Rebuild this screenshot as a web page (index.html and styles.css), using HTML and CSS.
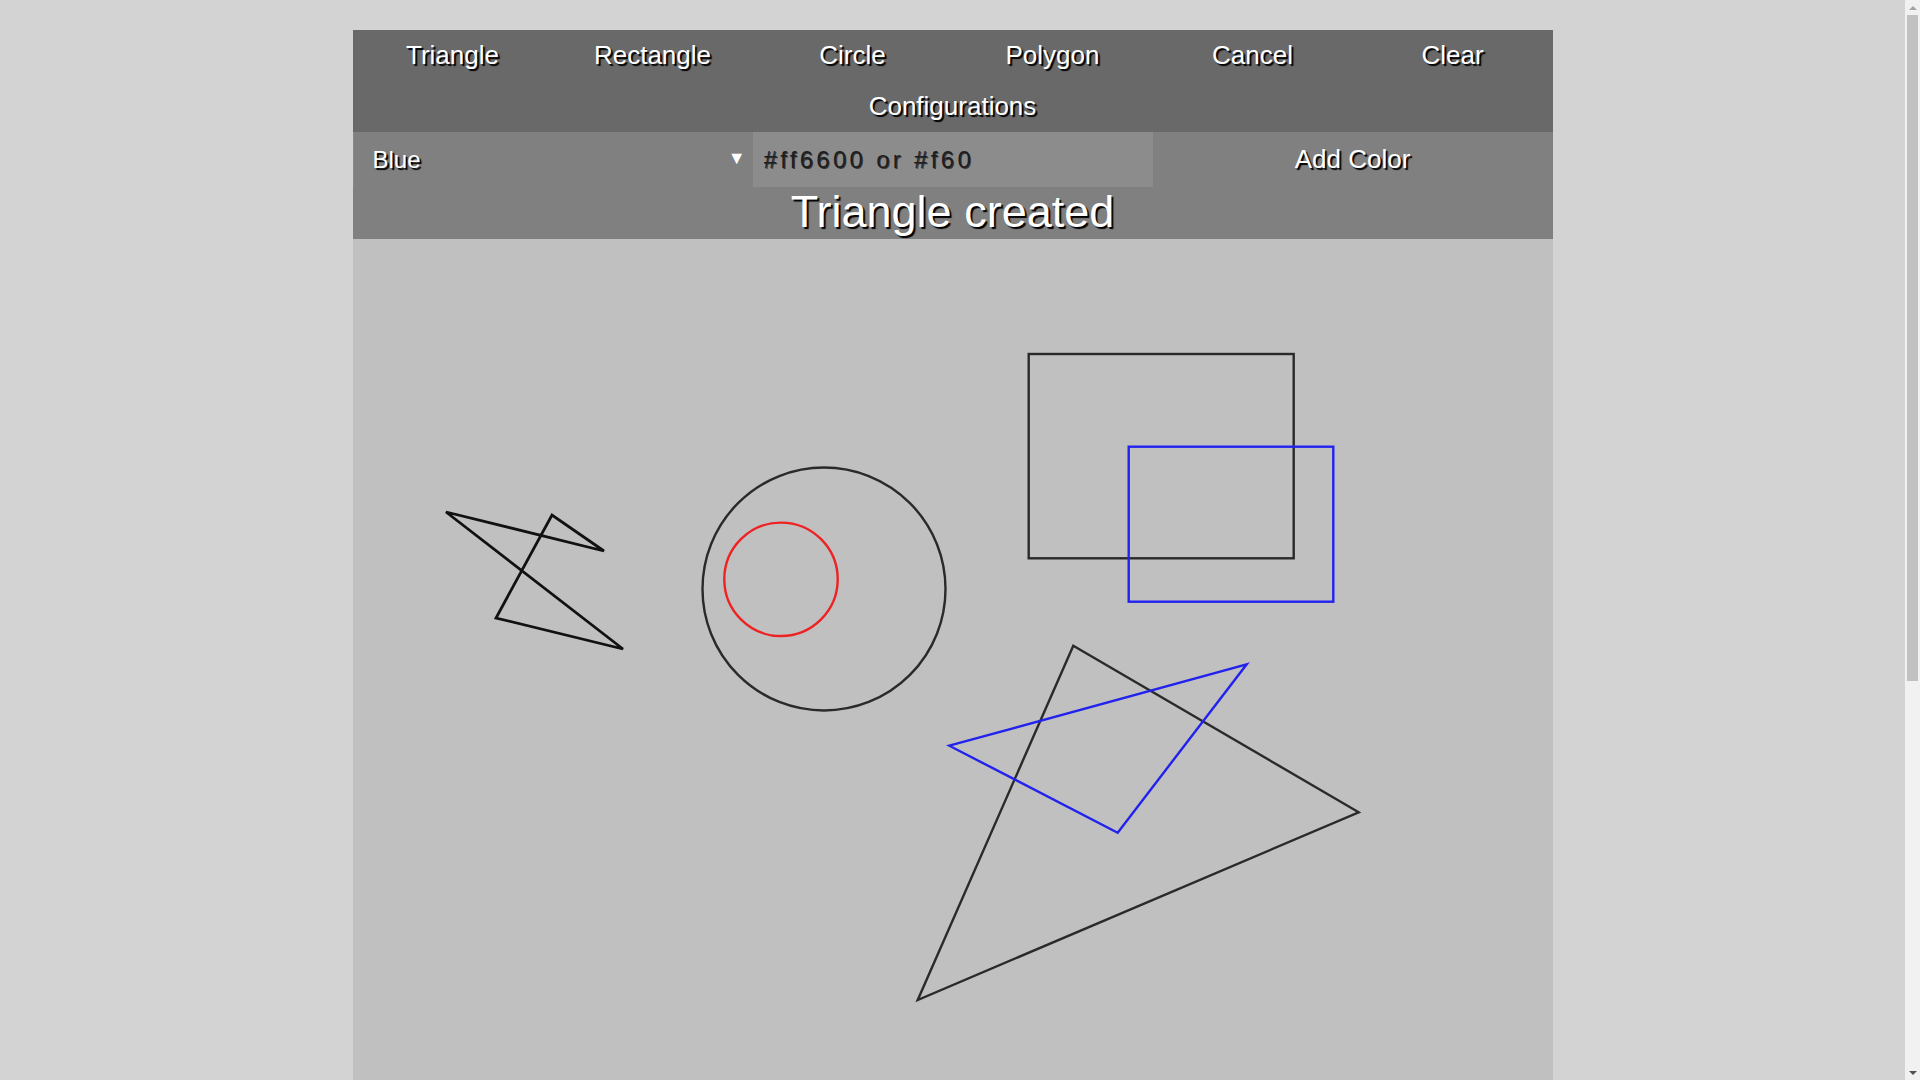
FILE: index.html
```html
<!DOCTYPE html>
<html lang="en">
<head>
<meta charset="utf-8">
<title>Shapes</title>
<link rel="stylesheet" href="styles.css">
</head>
<body>
<div class="app">
  <ul class="menu">
    <li class="menu-item">Triangle</li>
    <li class="menu-item">Rectangle</li>
    <li class="menu-item">Circle</li>
    <li class="menu-item">Polygon</li>
    <li class="menu-item">Cancel</li>
    <li class="menu-item">Clear</li>
    <li class="menu-item">Configurations</li>
  </ul>
  <div class="toolbar">
    <div class="controls">
      <div class="select-wrap">
        <select class="color-select">
          <option>Blue</option>
          <option>Red</option>
          <option>Black</option>
        </select>
        <span class="select-arrow">▼</span>
      </div>
      <input class="color-input" type="text" placeholder="#ff6600 or #f60">
      <button class="add-btn">Add Color</button>
    </div>
    <div class="message">Triangle created</div>
  </div>
  <div class="canvas">
    <svg class="drawing" width="1200" height="1460" viewBox="0 0 1200 1460">
      <polygon class="shape dark" points="93,273 251,312 199,276 143,379 270,410"/>
      <circle class="shape gray" cx="471" cy="350" r="121.5"/>
      <circle class="shape red" cx="428" cy="340.3" r="56.7"/>
      <rect class="shape gray" x="675.7" y="115" width="265" height="204.3"/>
      <rect class="shape blue" x="775.7" y="207.7" width="204.6" height="155"/>
      <polygon class="shape gray" points="720.3,406.7 1005.7,573.3 564.7,761"/>
      <polygon class="shape blue" points="596.3,506.7 893.7,425.3 764.7,593.7"/>
    </svg>
  </div>
</div>
<div class="scrollbar" aria-hidden="true">
  <div class="scroll-btn"><span class="arrow-up"></span></div>
  <div class="scroll-track"><div class="scroll-thumb"></div></div>
  <div class="scroll-btn"><span class="arrow-down"></span></div>
</div>
</body>
</html>
```

FILE: styles.css
```css
html {
  scrollbar-width: none;
}

html, body {
  margin: 0;
  padding: 0;
}

body {
  background: #d3d3d3;
  font-family: "Liberation Sans", Arial, sans-serif;
  padding-right: 15px;
}

.app {
  width: 1200px;
  margin: 30px auto 0;
}

.menu {
  list-style: none;
  margin: 0;
  padding: 0;
  display: flex;
  flex-wrap: wrap;
  justify-content: center;
  background: #696969;
}

.menu-item {
  width: 200px;
  height: 51px;
  line-height: 51px;
  text-align: center;
  color: #ffffff;
  font-size: 26px;
  text-shadow: 2px 2px 1px #000;
  cursor: pointer;
}

.toolbar {
  background: #808080;
}

.controls {
  display: flex;
  height: 55px;
}

.select-wrap {
  position: relative;
  width: 400px;
  height: 55px;
}

.color-select {
  appearance: none;
  -webkit-appearance: none;
  width: 100%;
  height: 100%;
  margin: 0;
  border: none;
  border-left: 1px solid #8a8a8a;
  background: #808080;
  color: #fff;
  font-family: "Liberation Sans", Arial, sans-serif;
  font-size: 24px;
  padding: 0 0 0 19px;
  text-shadow: 2px 2px 1px #000;
  outline: none;
}

.select-arrow {
  position: absolute;
  right: 7px;
  top: 16px;
  color: #fff;
  font-size: 18px;
  line-height: 20px;
  pointer-events: none;
}

.color-input {
  width: 400px;
  height: 55px;
  margin: 0;
  box-sizing: border-box;
  border: none;
  background: #8c8c8c;
  padding: 0 0 0 11px;
  font-family: "Liberation Sans", Arial, sans-serif;
  font-size: 24px;
  letter-spacing: 3.3px;
  color: #222;
  outline: none;
}

.color-input::placeholder {
  color: #1e1e1e;
  text-shadow: 1px 1px 0 rgba(0, 0, 0, 0.6);
}

.add-btn {
  width: 400px;
  height: 55px;
  margin: 0;
  border: none;
  background: transparent;
  color: #fff;
  font-family: "Liberation Sans", Arial, sans-serif;
  font-size: 26px;
  text-shadow: 2px 2px 1px #000;
  cursor: pointer;
}

.message {
  height: 52px;
  line-height: 50px;
  text-align: center;
  color: #fff;
  font-size: 45px;
  text-shadow: 2px 2px 1px #000;
}

.canvas {
  background: #c0c0c0;
  height: 1460px;
}

.drawing {
  display: block;
}

.shape {
  fill: none;
  stroke-width: 2.4;
  stroke-linejoin: miter;
}

.dark {
  stroke: #111;
  stroke-width: 2.8;
}

.gray {
  stroke: #2a2a2a;
}

.red {
  stroke: #ee2222;
}

.blue {
  stroke: #2222ee;
}

/* fake browser scrollbar overlaying the right edge of the viewport */
.scrollbar {
  position: fixed;
  top: 0;
  right: 0;
  width: 15px;
  height: 100vh;
  background: #f1f1f1;
  display: flex;
  flex-direction: column;
}

.scroll-btn {
  height: 15px;
  display: flex;
  align-items: center;
  justify-content: center;
}

.scroll-track {
  flex: 1;
  position: relative;
}

.scroll-thumb {
  margin: 0 2px;
  height: 666px;
  background: #c1c1c1;
}

.arrow-up,
.arrow-down {
  width: 0;
  height: 0;
  border-left: 4px solid transparent;
  border-right: 4px solid transparent;
}

.arrow-up {
  border-bottom: 4px solid #a3a3a3;
}

.arrow-down {
  border-top: 4px solid #505050;
}
```
